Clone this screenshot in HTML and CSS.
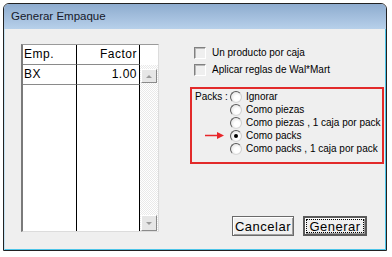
FILE: index.html
```html
<!DOCTYPE html>
<html lang="es">
<head>
    <meta charset="UTF-8">
    <title>Generar Empaque</title>
    <link rel="stylesheet" href="styles.css">
</head>
<body>
<div class="window">
    <div class="titlebar">Generar Empaque</div>
    <div class="body">
        <div class="table">
            <div class="cell c1 head">Emp.</div>
            <div class="cell c2 head num">Factor</div>
            <div class="cell head sb-head"></div>
            <div class="cell c1">BX</div>
            <div class="cell c2 num">1.00</div>
            <div class="scroll">
                <span class="sbtn up"></span>
                <span class="sbtn down"></span>
            </div>
            <div class="cell c1 fill"></div>
            <div class="cell c2 fill"></div>
        </div>
        <div class="side">
            <label class="check"><span class="box"></span>Un producto por caja</label>
            <label class="check"><span class="box"></span>Aplicar reglas de Wal*Mart</label>
            <div class="packs">
                <span class="packs-label">Packs :</span>
                <label class="opt"><span class="radio"></span>Ignorar</label>
                <label class="opt"><span class="radio"></span>Como piezas</label>
                <label class="opt"><span class="radio"></span>Como piezas , 1 caja por pack</label>
                <svg class="arrow" width="19" height="9" viewBox="0 0 19 9">
                    <line x1="0" y1="4.5" x2="13" y2="4.5" stroke="#e8262a" stroke-width="1.6"/>
                    <polygon points="12,1 19,4.5 12,8" fill="#e8262a"/>
                </svg>
                <label class="opt"><span class="radio on"></span>Como packs</label>
                <label class="opt"><span class="radio"></span>Como packs , 1 caja por pack</label>
            </div>
            <div class="buttons">
                <button class="btn">Cancelar</button>
                <button class="btn default"><span class="focus">Generar</span></button>
            </div>
        </div>
    </div>
</div>
</body>
</html>
```
FILE: styles.css
```css
*{
    margin: 0;
    padding: 0;
    box-sizing: border-box;
}
body{
    background: #fff;
    font-family: "Liberation Sans", Arial, sans-serif;
    color: #000;
}
.window{
    margin: 3px;
    width: 384px;
    height: 248px;
    border: 1px solid #222;
    border-radius: 6px 6px 0 0;
    display: flex;
    flex-direction: column;
    overflow: hidden;
}
.titlebar{
    height: 25px;
    flex: none;
    padding-left: 7px;
    line-height: 24px;
    font-size: 11.5px;
    color: #15192a;
    background: linear-gradient(#8eaccf, #b7d0ea);
}
.body{
    flex: 1;
    display: flex;
    background: #efefef;
    border-left: 1px solid #c4e2f2;
    border-right: 1px solid #4cc4e8;
    border-bottom: 1px solid #4cc4e8;
    padding: 15px 0 0 16px;
}

/* list */
.table{
    width: 138px;
    height: 188px;
    flex: none;
    display: grid;
    grid-template-columns: 54px 63px 18px;
    grid-template-rows: 20px 20px 1fr;
    background: #fff;
    border-left: 2px solid #7a7a7a;
    border-top: 1px solid #9a9a9a;
    border-right: 1px solid #dcdcdc;
    border-bottom: 1px solid #dcdcdc;
    font-size: 12px;
    letter-spacing: 0.5px;
}
.cell{
    padding: 0 2px 0 1px;
    line-height: 19px;
    border-bottom: 1px solid #8a8a8a;
}
.cell.c1,.cell.c2{
    border-right: 1px solid #000;
}
.cell.fill{
    border-bottom: none;
}
.cell.num{
    text-align: right;
}
.sb-head{
    border-bottom: none;
}
.scroll{
    grid-column: 3;
    grid-row: 2 / 4;
    display: flex;
    flex-direction: column;
    justify-content: space-between;
    padding: 4px 1px 0 1px;
    background-color: #fff;
    background-image: repeating-conic-gradient(#e9e9e9 0 25%, #fff 0 50%);
    background-size: 2px 2px;
}
.sbtn{
    display: flex;
    align-items: center;
    justify-content: center;
    width: 16px;
    height: 14px;
    background: #e6e6e6;
    border: 1px solid;
    border-color: #fff #8a8a8a #8a8a8a #fff;
    box-shadow: 0 0 0 0 #000;
}
.sbtn.down{
    height: 16px;
}
.sbtn::after{
    content: "";
    border-left: 3px solid transparent;
    border-right: 3px solid transparent;
}
.sbtn.up::after{
    border-bottom: 3px solid #9a9a9a;
}
.sbtn.down::after{
    border-top: 3px solid #9a9a9a;
}

/* right side */
.side{
    margin-left: 31px;
    width: 194px;
    display: flex;
    flex-direction: column;
    font-size: 10px;
}
.check{
    height: 17px;
    display: flex;
    align-items: center;
    padding-left: 4px;
    gap: 6px;
}
.box{
    width: 12px;
    height: 12px;
    background: #efefef;
    border: 1px solid;
    border-color: #808080 #fff #fff #808080;
    box-shadow: inset 1px 1px 0 #b8b8b8;
}
.packs{
    margin-top: 9px;
    height: 77px;
    border: 2px solid #e22a2a;
    padding: 1px 0 0 3px;
    display: grid;
    grid-template-columns: 35px 1fr;
    grid-auto-rows: 13px;
    align-items: center;
}
.packs-label{
    grid-column: 1;
}
.opt{
    grid-column: 2;
    display: flex;
    align-items: center;
    gap: 4px;
}
.arrow{
    grid-column: 1;
    justify-self: end;
    margin-right: 6px;
}
.radio{
    width: 12px;
    height: 12px;
    border-radius: 50%;
    border: 1px solid;
    border-color: #5a5a5a #d0d0d0 #d8d8d8 #5a5a5a;
    background: radial-gradient(circle at 60% 60%, #fff 30%, #e2e2e2 80%);
    display: flex;
    align-items: center;
    justify-content: center;
}
.radio.on::after{
    content: "";
    width: 4px;
    height: 4px;
    border-radius: 50%;
    background: #000;
}
.buttons{
    margin-top: auto;
    margin-bottom: 13px;
    margin-right: 17px;
    display: flex;
    justify-content: flex-end;
    gap: 9px;
}
.btn{
    height: 20px;
    font-family: "Liberation Sans", Arial, sans-serif;
    font-size: 13px;
    letter-spacing: 0.5px;
    color: #000;
    background: #f0f0f0;
    border: 1px solid #6a6a6a;
    box-shadow: inset 1px 1px 0 #fff, inset -1px -1px 0 #a0a0a0;
    width: 62px;
}
.btn.default{
    width: 64px;
    border: 2px solid #5a5a5a;
    padding: 1px;
}
.focus{
    display: block;
    height: 100%;
    line-height: 14px;
    border: 1px dotted #000;
}
```
